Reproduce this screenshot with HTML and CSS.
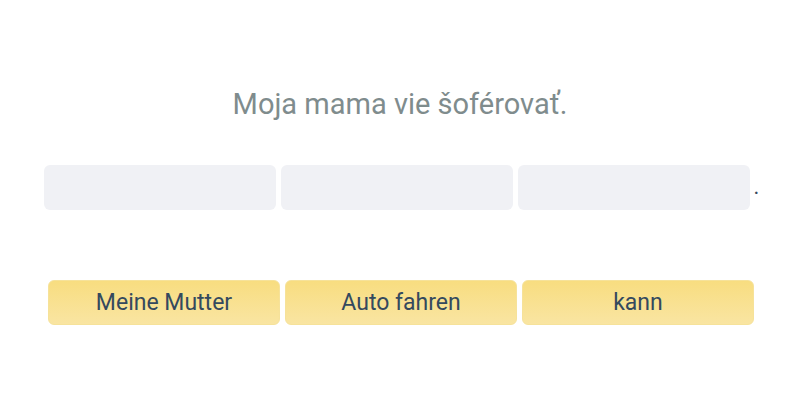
FILE: index.html
```html
<!DOCTYPE html>
<html lang="sk">
<head>
<meta charset="utf-8">
<link rel="stylesheet" href="styles.css">
</head>
<body>
<main class="exercise">
  <h1 class="prompt">Moja mama vie šoférovať.</h1>
  <div class="answer">
    <div class="slot"></div>
    <div class="slot"></div>
    <div class="slot"></div>
    <span class="period">.</span>
  </div>
  <div class="choices">
    <button class="chip">Meine Mutter</button>
    <button class="chip">Auto fahren</button>
    <button class="chip">kann</button>
  </div>
</main>
</body>
</html>
```
FILE: styles.css
```css
html, body {
  margin: 0;
  padding: 0;
  background: #ffffff;
}
body {
  font-family: Roboto, "Liberation Sans", sans-serif;
  width: 800px;
  height: 400px;
  overflow: hidden;
}
.exercise {
  display: flex;
  flex-direction: column;
  align-items: center;
  padding-top: 87px;
}
.prompt {
  margin: 0;
  font-size: 29px;
  line-height: 34px;
  font-weight: 400;
  color: #7f8c8d;
}
.answer {
  display: flex;
  align-items: flex-end;
  gap: 5px;
  margin-top: 44px;
  margin-left: 3px;
}
.slot {
  width: 232px;
  height: 45px;
  background: #f0f1f5;
  border-radius: 6px;
}
.period {
  font-size: 22px;
  line-height: 30px;
  color: #34495e;
  margin-left: -1px;
  padding-bottom: 8px;
}
.choices {
  display: flex;
  gap: 5px;
  margin-top: 70px;
  margin-left: 2px;
}
.chip {
  width: 232px;
  height: 45px;
  border: 1px solid #f6e29a;
  border-radius: 6px;
  background: linear-gradient(180deg, #f8dd80 0%, #f9e5a2 100%);
  font-family: Roboto, "Liberation Sans", sans-serif;
  font-size: 23px;
  color: #34495e;
  padding: 0;
}
```
